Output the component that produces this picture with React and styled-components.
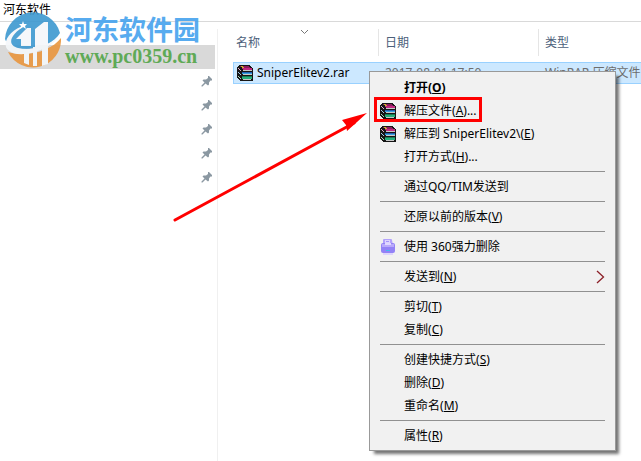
import React from "react";
import styled, { createGlobalStyle } from "styled-components";

const GlobalStyle = createGlobalStyle`
    * { box-sizing: border-box; }
    body {
        margin: 0;
        background: #fff;
        color: #000;
        font: 12px/22px "Noto Sans", "Noto Sans CJK SC", sans-serif;
    }
`

const Explorer = styled.div`
    position: relative;
    display: flex;
    flex-direction: column;
    min-height: 100vh;
    overflow: hidden;
`

const AddressBar = styled.header`
    height: 22px;
    padding-left: 3px;
    line-height: 20px;
    border-bottom: 1px solid #d9d9d9;
`

const Panes = styled.div`
    display: flex;
    flex: 1;
    padding-top: 7px;
`

const Sidebar = styled.nav`
    flex: 0 0 218px;
    padding: 16px 2px 0 0;
    border-right: 1px solid #f0f0f0;
`

const QuickRow = styled.div`
    display: flex;
    align-items: center;
    justify-content: flex-end;
    height: 24px;
    padding-right: 2px;
    background: ${props => props.$selected ? "#d9d9d9" : "transparent"};
`

const FilePane = styled.main`
    flex: 1;
    min-width: 0;
    padding-left: 15px;
`

const FileTable = styled.table`
    width: 100%;
    table-layout: fixed;
    border-spacing: 0;
    white-space: nowrap;
`

const HeadCell = styled.th`
    width: ${props => props.$width || "auto"};
    padding: 0 0 6px;
    color: #4c607a;
    font-weight: normal;
    text-align: left;
`

const HeadLabel = styled.div`
    position: relative;
    height: 27px;
    padding-left: ${props => props.$pad};
    line-height: 27px;
    border-right: ${props => props.$last ? "none" : "1px solid #e5e5e5"};
`

const SortMark = styled.svg`
    position: absolute;
    top: 0;
    left: 67px;
    display: block;
`

const Cell = styled.td`
    height: 22px;
    padding: 0 0 0 ${props => props.$pad};
    line-height: 20px;
    color: ${props => props.$dim ? "#6d6d6d" : "#000"};
    background: #cce8ff;
    border: 0 solid #99d1ff;
    border-width: 1px 0;
    border-left-width: ${props => props.$first ? "1px" : "0"};
`

const FileName = styled.span`
    display: flex;
    align-items: center;
    gap: 4px;
`

const Menu = styled.div`
    position: absolute;
    top: 71px;
    left: 369px;
    width: 247px;
    padding: 4px 0 3px;
    background: #f1f1f1;
    border: 1px solid #999;
    box-shadow: 4px 4px 3px -1px rgba(0, 0, 0, 0.55);
`

const MenuButton = styled.button`
    display: grid;
    grid-template-columns: 16px 1fr auto;
    column-gap: 8px;
    align-items: center;
    width: 100%;
    height: 23px;
    padding: 0 10px;
    border: 0;
    background: none;
    color: inherit;
    font: inherit;
    font-weight: ${props => props.$bold ? "bold" : "normal"};
    text-align: left;
    white-space: nowrap;
`

const Key = styled.u`
    text-underline-offset: 1px;
`

const Divider = styled.hr`
    height: 1px;
    margin: 3px 10px;
    border: 0;
    background: #919191;
`

const Highlight = styled.div`
    position: absolute;
    top: 97px;
    left: 374px;
    width: 108px;
    height: 25px;
    border: 3px solid #f00;
    pointer-events: none;
`

const Arrow = styled.svg`
    position: absolute;
    top: 110px;
    left: 172px;
    pointer-events: none;
`

const Watermark = styled.div`
    position: absolute;
    top: 11px;
    left: 4px;
    display: flex;
    gap: 4px;
    opacity: 0.9;
    pointer-events: none;
`

const SiteName = styled.div`
    padding-top: 4px;
    color: #45a3ee;
    font: bold 27px/27px "Noto Sans CJK SC", sans-serif;
`

const SiteUrl = styled.div`
    color: #52a548;
    font: bold 20px/28px "Liberation Serif", serif;
`

const Pin = () => (
    <svg width="12" height="12" viewBox="0 0 12 12" fill="#8b98a2">
        <path d="M7 1L8 1L11 4L11 5.500L9.500 5.500L8 7.500L8 9.500L7 10.500L4.500 8.500L1.500 11.500L0.500 11.500L0.500 10.500L3.500 7.500L1.500 5.500L2.500 4.500L5 4.500L7 3Z" />
    </svg>
)

const RarIcon = () => (
    <svg width="16" height="16" viewBox="0 0 16 16" shapeRendering="crispEdges">
        <path fill="#161616" d="M3 0H12L16 4V16H4L0 13V2Z" />
        <path fill="#8c1a5e" d="M3 1H11L14 3H6L3 2Z" />
        <path fill="#c0287f" d="M5 3H15V5H6L5 4Z" />
        <path fill="#e4a8c8" d="M1 3L4 5V6H3L1 4Z" />
        <path fill="#c8c8c8" d="M6 5H15V6H6Z" />
        <path fill="#1f5fae" d="M5 7H15V8H5Z" />
        <path fill="#38a0e0" d="M5 8H15V9H5Z" />
        <path fill="#9fc8e8" d="M1 7L4 9V10H3L1 8Z" />
        <path fill="#c8c8c8" d="M6 9H15V10H6Z" />
        <path fill="#157a50" d="M5 11H15V12H5Z" />
        <path fill="#25b07c" d="M5 12H15V14H5Z" />
        <path fill="#a8dcc0" d="M1 11L4 13V14H3L1 12Z" />
        <path fill="#c8c8c8" d="M6 14H14V15H6Z" />
        <path fill="#d0b030" d="M4 1H6V2H7V3H5V2H4Z" />
    </svg>
)

const ShredIcon = () => (
    <svg width="16" height="16" viewBox="0 0 16 16">
        <path fill="#b3a2fb" d="M3 1Q3 0 4 0H11Q12 0 12 1L13 6H3Z" />
        <path fill="#ddd4ff" d="M5 1H10V5H5Z" />
        <path fill="#a494f8" d="M6 2H9V3H6Z" />
        <rect x="1" y="4" width="14" height="10" rx="2" fill="#9382f6" />
        <path fill="#b9a9fb" d="M2 5H14V8H2Z" />
        <path fill="#e0d8ff" d="M5 4H11V6H5Z" />
        <path fill="#40b9f0" d="M6 11H10V12H6Z" />
        <path fill="#ddd5fb" d="M3 14H13V16H3Z" />
    </svg>
)

const Chevron = () => (
    <svg width="9" height="14" viewBox="0 0 9 14" fill="none" stroke="#8c2028" strokeWidth="1.3">
        <path d="M1 1L7.500 7L1 13" />
    </svg>
)

const Logo = () => (
    <svg width="57" height="57" viewBox="0 0 57 57">
        <path fill="#3d98d0" d="M1 28A28 28 0 0 1 56 22C50 33 31 41 5 37Z" />
        <path fill="#e9963e" d="M4 41C25 47 48 39 57 27A28 28 0 0 1 4 41Z" />
        <path fill="#f4f7fa" d="M12 28L23 17H27V35H17V28Z" />
        <path fill="#f4f7fa" d="M31 18L40 11H44V53L38 55V38H33V55H29V36H31Z" />
        <path fill="#f4f7fa" d="M20 41H25V54L20 52Z" />
        <path fill="#f4f7fa" d="M22 14C6 18 -3 32 4 39C14 49 47 40 57 23C51 32 31 41 14 37C3 34 5 24 22 14Z" />
        <path fill="#fff" d="M19 10L20 13L23 13L21 15L22 18L19 16L16 18L17 15L15 13L18 13Z" />
    </svg>
)

const menuGroups = [
    [
        { text: "打开", hotkey: "O", bold: true },
        { text: "解压文件", hotkey: "A", tail: "...", icon: <RarIcon /> },
        { text: "解压到 SniperElitev2\\", hotkey: "E", icon: <RarIcon /> },
        { text: "打开方式", hotkey: "H", tail: "..." },
    ],
    [{ text: "通过QQ/TIM发送到" }],
    [{ text: "还原以前的版本", hotkey: "V" }],
    [{ text: "使用 360强力删除", icon: <ShredIcon /> }],
    [{ text: "发送到", hotkey: "N", submenu: true }],
    [{ text: "剪切", hotkey: "T" }, { text: "复制", hotkey: "C" }],
    [
        { text: "创建快捷方式", hotkey: "S" },
        { text: "删除", hotkey: "D" },
        { text: "重命名", hotkey: "M" },
    ],
    [{ text: "属性", hotkey: "R" }],
]

const MenuItem = ({ item }) => (
    <MenuButton type="button" role="menuitem" $bold={item.bold}>
        {item.icon || <span />}
        <span>
            {item.text}
            {item.hotkey && <>(<Key>{item.hotkey}</Key>)</>}
            {item.tail}
        </span>
        {item.submenu && <Chevron />}
    </MenuButton>
)

const ContextMenu = () => (
    <Menu role="menu">
        {menuGroups.map((group, i) => (
            <React.Fragment key={i}>
                {i > 0 && <Divider />}
                {group.map(item => <MenuItem key={item.text} item={item} />)}
            </React.Fragment>
        ))}
    </Menu>
)

const FileList = () => (
    <FileTable>
        <thead>
            <tr>
                <HeadCell $width="146px">
                    <HeadLabel $pad="3px">
                        名称
                        <SortMark width="9" height="6" viewBox="0 0 9 6" fill="none" stroke="#777">
                            <path d="M1 1L4.500 4.500L8 1" />
                        </SortMark>
                    </HeadLabel>
                </HeadCell>
                <HeadCell $width="160px"><HeadLabel $pad="6px">日期</HeadLabel></HeadCell>
                <HeadCell><HeadLabel $pad="6px" $last>类型</HeadLabel></HeadCell>
            </tr>
        </thead>
        <tbody>
            <tr>
                <Cell $first $pad="3px"><FileName><RarIcon />SniperElitev2.rar</FileName></Cell>
                <Cell $dim $pad="6px">2017-08-01 17:50</Cell>
                <Cell $dim $pad="6px">WinRAR 压缩文件</Cell>
            </tr>
        </tbody>
    </FileTable>
)

export default function App() {
    return (
        <>
            <GlobalStyle />
            <Explorer>
                <AddressBar>河东软件</AddressBar>
                <Panes>
                    <Sidebar>
                        <QuickRow $selected />
                        {[1, 2, 3, 4, 5].map(n => <QuickRow key={n}><Pin /></QuickRow>)}
                    </Sidebar>
                    <FilePane><FileList /></FilePane>
                </Panes>
                <Watermark>
                    <Logo />
                    <div>
                        <SiteName>河东软件园</SiteName>
                        <SiteUrl>www.pc0359.cn</SiteUrl>
                    </div>
                </Watermark>
                <ContextMenu />
                <Highlight />
                <Arrow width="200" height="115" viewBox="0 0 200 115">
                    <path d="M3 110L182 13" stroke="#f00" strokeWidth="3" strokeLinecap="round" />
                    <path d="M195 3L170 10L174 15L175 21Z" fill="#f00" />
                </Arrow>
            </Explorer>
        </>
    )
}
